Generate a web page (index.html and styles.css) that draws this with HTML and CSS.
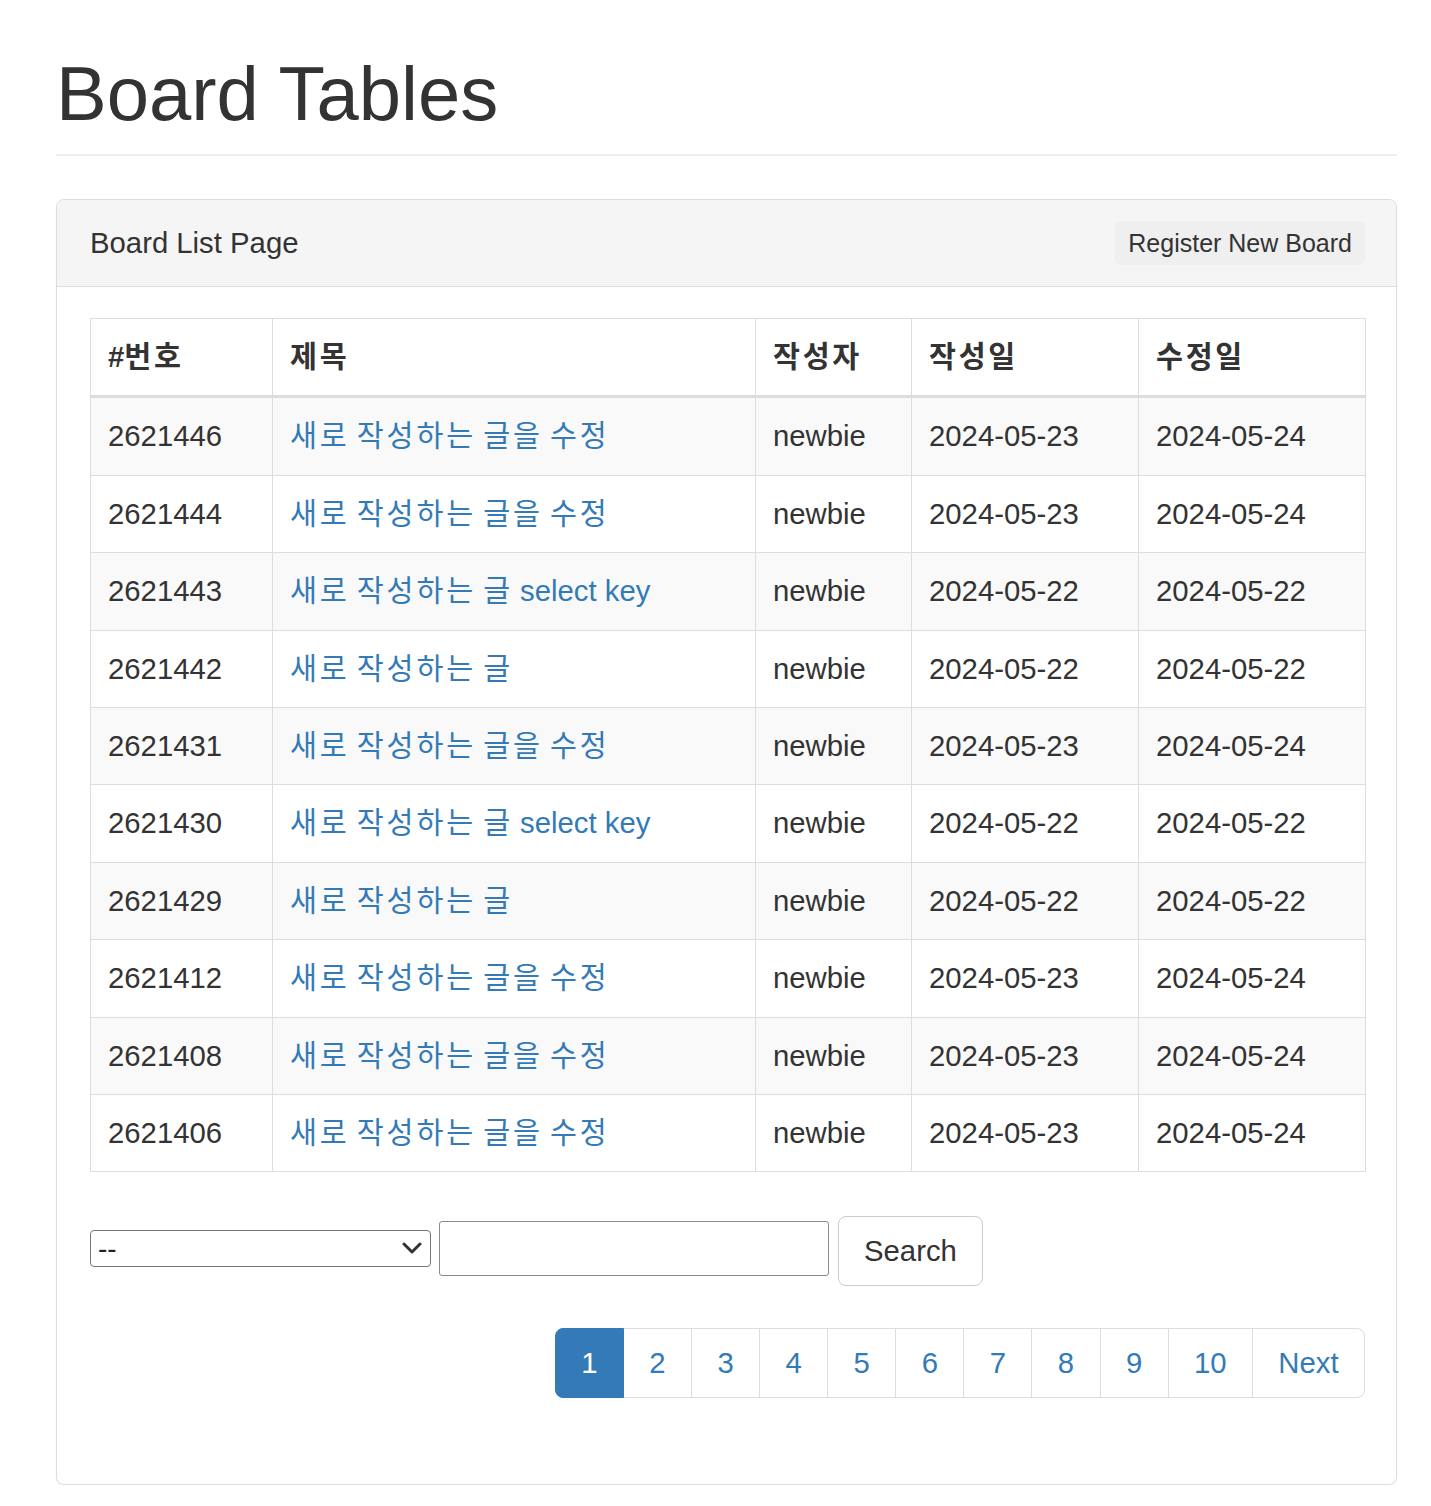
FILE: index.html
```html
<!DOCTYPE html>
<html lang="ko">
<head>
<meta charset="utf-8">
<title>Board Tables</title>
<link rel="stylesheet" href="styles.css">
</head>
<body>
<div class="wrapper">
  <h1 class="page-header">Board Tables</h1>
  <div class="panel">
    <div class="panel-heading">
      <span class="panel-title">Board List Page</span>
      <button type="button" class="reg-btn">Register New Board</button>
    </div>
    <div class="panel-body">
      <table class="board-table">
        <colgroup>
          <col class="c-bno"><col class="c-title"><col class="c-writer"><col class="c-date"><col class="c-date">
        </colgroup>
        <thead>
          <tr><th>#<span class="ko">번호</span></th><th><span class="ko">제목</span></th><th><span class="ko">작성자</span></th><th><span class="ko">작성일</span></th><th><span class="ko">수정일</span></th></tr>
        </thead>
        <tbody>
          <tr><td>2621446</td><td><a href="#"><span class="ko">새로 작성하는 글을 수정</span></a></td><td>newbie</td><td>2024-05-23</td><td>2024-05-24</td></tr>
          <tr><td>2621444</td><td><a href="#"><span class="ko">새로 작성하는 글을 수정</span></a></td><td>newbie</td><td>2024-05-23</td><td>2024-05-24</td></tr>
          <tr><td>2621443</td><td><a href="#"><span class="ko">새로 작성하는 글 </span>select key</a></td><td>newbie</td><td>2024-05-22</td><td>2024-05-22</td></tr>
          <tr><td>2621442</td><td><a href="#"><span class="ko">새로 작성하는 글</span></a></td><td>newbie</td><td>2024-05-22</td><td>2024-05-22</td></tr>
          <tr><td>2621431</td><td><a href="#"><span class="ko">새로 작성하는 글을 수정</span></a></td><td>newbie</td><td>2024-05-23</td><td>2024-05-24</td></tr>
          <tr><td>2621430</td><td><a href="#"><span class="ko">새로 작성하는 글 </span>select key</a></td><td>newbie</td><td>2024-05-22</td><td>2024-05-22</td></tr>
          <tr><td>2621429</td><td><a href="#"><span class="ko">새로 작성하는 글</span></a></td><td>newbie</td><td>2024-05-22</td><td>2024-05-22</td></tr>
          <tr><td>2621412</td><td><a href="#"><span class="ko">새로 작성하는 글을 수정</span></a></td><td>newbie</td><td>2024-05-23</td><td>2024-05-24</td></tr>
          <tr><td>2621408</td><td><a href="#"><span class="ko">새로 작성하는 글을 수정</span></a></td><td>newbie</td><td>2024-05-23</td><td>2024-05-24</td></tr>
          <tr><td>2621406</td><td><a href="#"><span class="ko">새로 작성하는 글을 수정</span></a></td><td>newbie</td><td>2024-05-23</td><td>2024-05-24</td></tr>
        </tbody>
      </table>

      <form class="search-form" action="#">
        <span class="select-wrap">
          <select class="search-select" name="type">
            <option value="">--</option>
            <option value="T">제목</option>
            <option value="C">내용</option>
            <option value="W">작성자</option>
          </select>
          <svg class="chevron" width="20" height="12" viewBox="0 0 20 12" aria-hidden="true"><path d="M2 2 L10 10 L18 2" fill="none" stroke="#333" stroke-width="3" stroke-linecap="round" stroke-linejoin="round"/></svg>
        </span>
        <input class="search-input" type="text" name="keyword">
        <button type="button" class="search-btn">Search</button>
      </form>

      <ul class="pagination">
        <li class="active"><a href="#">1</a></li>
        <li><a href="#">2</a></li>
        <li><a href="#">3</a></li>
        <li><a href="#">4</a></li>
        <li><a href="#">5</a></li>
        <li><a href="#">6</a></li>
        <li><a href="#">7</a></li>
        <li><a href="#">8</a></li>
        <li><a href="#">9</a></li>
        <li><a href="#">10</a></li>
        <li><a href="#">Next</a></li>
      </ul>
    </div>
  </div>
</div>
</body>
</html>
```

FILE: styles.css
```css
* { box-sizing: border-box; }

html, body {
  margin: 0;
  padding: 0;
  background: #fff;
}

body {
  font-family: "Liberation Sans", Arial, "Noto Sans CJK KR", sans-serif;
  color: #333;
  font-size: 29.3px;
}

.wrapper {
  width: 1397px;
  padding: 53px 0 0 56px;
}

.page-header {
  margin: 0 0 43px 0;
  padding-bottom: 19px;
  border-bottom: 2px solid #eee;
  font-size: 76px;
  line-height: 82px;
  font-weight: 500;
}

.panel {
  border: 1px solid #ddd;
  border-radius: 8px;
  background: #fff;
  box-shadow: 0 1px 2px rgba(0, 0, 0, 0.05);
}

.panel-heading {
  display: flex;
  justify-content: space-between;
  align-items: center;
  padding: 21px 31px 21px 33px;
  background: #f5f5f5;
  border-bottom: 1px solid #ddd;
  border-radius: 7px 7px 0 0;
}

.panel-title {
  font-size: 29.3px;
  line-height: 42px;
}

.reg-btn {
  font-family: "Liberation Sans", Arial, sans-serif;
  font-size: 25px;
  line-height: 38px;
  padding: 2px 12px;
  color: #333;
  background: #efefef;
  border: 1px solid transparent;
  border-radius: 6px;
}

.panel-body {
  padding: 31px 31px 86px 33px;
}

.board-table {
  width: 100%;
  border-collapse: collapse;
  table-layout: fixed;
  border: 1px solid #ddd;
  margin-bottom: 44px;
}

.c-bno { width: 182px; }
.c-title { width: 483px; }
.c-writer { width: 156px; }
.c-date { width: 227px; }

.board-table th,
.board-table td {
  border: 1px solid #ddd;
  padding: 17px 17px;
  line-height: 42.4px;
  text-align: left;
  vertical-align: top;
  font-size: 29.3px;
  white-space: nowrap;
}

.board-table th {
  font-weight: bold;
  border-bottom: 3px solid #ddd;
}

.board-table tbody tr:nth-child(odd) {
  background: #f9f9f9;
}

.board-table a {
  color: #337ab7;
  text-decoration: none;
}

.ko {
  letter-spacing: 2.9px;
  word-spacing: -4px;
}

.board-table th .ko {
  letter-spacing: 2.7px;
}

.search-form {
  display: flex;
  align-items: center;
  margin: 0;
}

.select-wrap {
  position: relative;
  display: inline-flex;
  margin-bottom: 6px;
}

.search-select {
  appearance: none;
  -webkit-appearance: none;
  width: 341px;
  height: 37px;
  padding: 0 40px 0 7px;
  font-family: "Liberation Sans", Arial, sans-serif;
  font-size: 28px;
  line-height: 35px;
  color: #222;
  background: #fff;
  border: 1px solid #767676;
  border-radius: 4px;
}

.chevron {
  position: absolute;
  right: 9px;
  top: 12px;
  pointer-events: none;
}

.search-input {
  width: 390px;
  height: 55px;
  margin-left: 8px;
  margin-bottom: 6px;
  border: 1px solid #8a8a8a;
  border-radius: 3px;
  background: #fff;
  font-size: 28px;
}

.search-btn {
  margin-left: 9px;
  padding: 13px 25px;
  font-family: "Liberation Sans", Arial, sans-serif;
  font-size: 29.3px;
  line-height: 42px;
  color: #333;
  background: #fff;
  border: 1px solid #ccc;
  border-radius: 8px;
}

.pagination {
  list-style: none;
  display: flex;
  justify-content: flex-end;
  margin: 42px 0 0 0;
  padding: 0;
}

.pagination li a {
  display: block;
  padding: 13px 25.4px;
  font-size: 29.3px;
  line-height: 42px;
  color: #337ab7;
  text-decoration: none;
  background: #fff;
  border: 1px solid #ddd;
  margin-left: -1px;
}

.pagination li:first-child a {
  margin-left: 0;
  border-radius: 8px 0 0 8px;
}

.pagination li:last-child a {
  border-radius: 0 8px 8px 0;
}

.pagination li.active a {
  background: #337ab7;
  border-color: #337ab7;
  color: #fff;
  position: relative;
  z-index: 1;
}
```
